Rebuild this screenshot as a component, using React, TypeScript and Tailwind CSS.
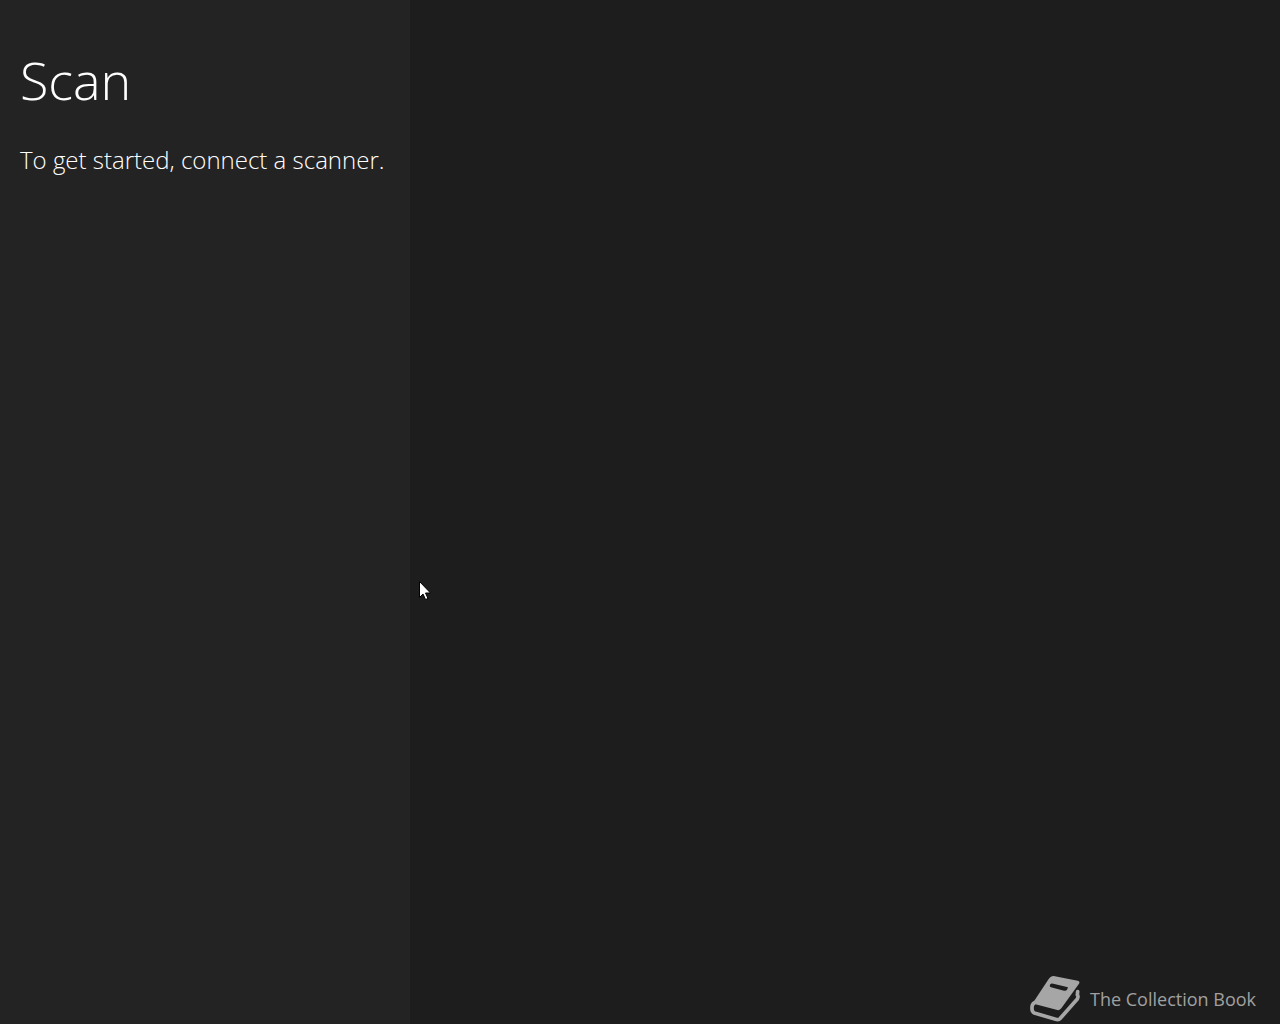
function BookIcon() {
    return (
        <svg viewBox="0 0 162 150" className="w-[54px] h-[50px] shrink-0" aria-hidden="true">
            <path
                fill="#a6a6a6"
                fillRule="evenodd"
                d="M77 6 L149 20 Q157 22 153 29 L100 103 Q95 110 88 108 L28 92 Q20 89 10 94 L62 15 Q69 5 77 6 Z M67 31 Q63 38 69 40 L108 50 Q115 51 117 47 L120 40 L76 29 Q69 27 67 31 Z"
            />
            <path
                fill="none"
                stroke="#a6a6a6"
                strokeWidth="11"
                strokeLinejoin="round"
                strokeLinecap="round"
                d="M20 86 Q12 90 12 100 Q11 114 19 117 L83 136 Q92 139 97 133 L148 75 Q152 67 148 63 L149 53"
            />
        </svg>
    );
}

function Pointer() {
    return (
        <svg viewBox="0 0 12 19" className="fixed left-[419px] top-[581px] w-3 h-[19px] pointer-events-none" aria-hidden="true">
            <path d="M.5 .5 V16.5 L4 13 L6.5 18.5 L9 17.5 L6.5 12 H11.5 Z" fill="#fff" stroke="#000" strokeWidth="1"/>
        </svg>
    );
}

export default function App() {
    return (
        <div className="min-h-screen flex bg-[#1d1d1d] text-white font-['Open_Sans','Noto_Sans',sans-serif]">
            <aside className="w-[32%] min-w-fit shrink-0 bg-[#232323] px-5 pt-10">
                <h1 className="text-[52px] leading-[80px] font-light">Scan</h1>
                <p className="mt-6 text-2xl leading-8 font-light whitespace-nowrap">To get started, connect a scanner.</p>
            </aside>
            <main className="flex-1 flex items-end justify-end pr-6">
                <div className="flex items-center gap-2 text-[#a0a0a0]">
                    <BookIcon/>
                    <span className="text-lg">The Collection Book</span>
                </div>
            </main>
            <Pointer/>
        </div>
    );
}
